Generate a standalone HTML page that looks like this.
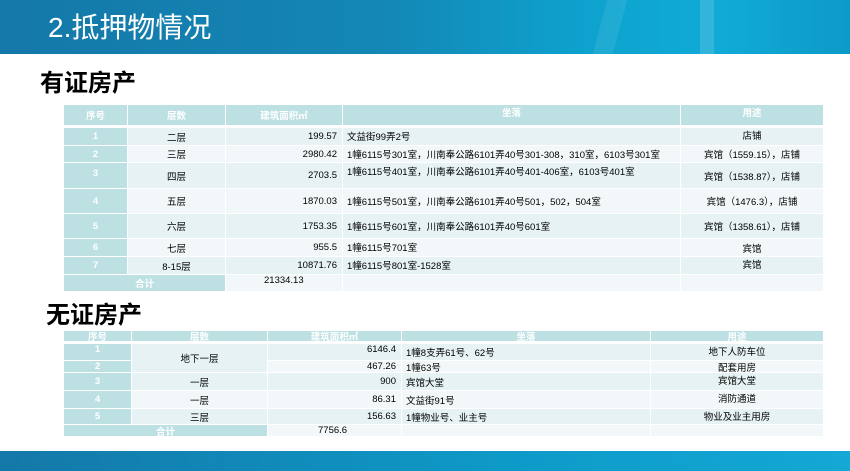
<!DOCTYPE html>
<html><head><meta charset="utf-8"><style>
body{margin:0;width:850px;height:471px;position:relative;overflow:hidden;background:#fff;font-family:"Liberation Sans","Noto Sans CJK SC",sans-serif}
.b{position:absolute;box-sizing:border-box;font-size:9.5px;color:#000;display:flex;align-items:center;justify-content:center;white-space:nowrap;overflow:hidden}
.h{background:#bde0e3;color:#fff;font-weight:bold}
.s{background:#bde0e3;color:#fff;font-weight:bold}
.a{background:#e6f2f3}.c{background:#f2f8f9}
.r{justify-content:flex-end;padding-right:5px}
.l{justify-content:flex-start;align-items:flex-start;padding-left:4px;padding-top:1px}
.l2{justify-content:flex-start;padding-left:4px}
</style></head><body>
<div style="position:absolute;left:0;top:0;width:850px;height:54px;background:linear-gradient(90deg,#1478a8 0%,#1487b5 45%,#0ea3cf 70%,#10aad6 85%,#0e9ac8 100%)"></div>
<div style="position:absolute;left:600px;top:0;width:20px;height:54px;background:rgba(255,255,255,.08);transform:skewX(-15deg)"></div>
<div style="position:absolute;left:700px;top:0;width:14px;height:54px;background:rgba(255,255,255,.15)"></div>
<div style="position:absolute;left:48px;top:6px;font-size:28px;color:#fff">2.抵押物情况</div>
<div style="position:absolute;left:40px;top:63px;font-size:24px;font-weight:bold;color:#000">有证房产</div>
<div style="position:absolute;left:46px;top:295px;font-size:24px;font-weight:bold;color:#000">无证房产</div>
<div style="position:absolute;left:0;top:451px;width:850px;height:20px;background:linear-gradient(90deg,#1478a8,#0e9ac8 60%,#14a8d4)"></div>

<div class="b h" style="left:64px;top:105px;width:63px;height:20px">序号</div>
<div class="b h" style="left:128px;top:105px;width:97px;height:20px">层数</div>
<div class="b h" style="left:226px;top:105px;width:116px;height:20px">建筑面积㎡</div>
<div class="b h" style="left:343px;top:105px;width:337px;height:20px;align-items:flex-start">坐落</div>
<div class="b h" style="left:681px;top:105px;width:142px;height:20px;align-items:flex-start">用途</div>

<div class="b s" style="left:64px;top:128px;width:63px;height:17px">1</div>
<div class="b a" style="left:128px;top:128px;width:97px;height:17px">二层</div>
<div class="b a r" style="left:226px;top:128px;width:116px;height:17px">199.57</div>
<div class="b a l" style="left:343px;top:128px;width:337px;height:17px">文益街99弄2号</div>
<div class="b a" style="left:681px;top:128px;width:142px;height:17px;align-items:flex-start">店铺</div>

<div class="b s" style="left:64px;top:146px;width:63px;height:16px">2</div>
<div class="b c" style="left:128px;top:146px;width:97px;height:16px">三层</div>
<div class="b c r" style="left:226px;top:146px;width:116px;height:16px">2980.42</div>
<div class="b c l" style="left:343px;top:146px;width:337px;height:16px">1幢6115号301室，川南奉公路6101弄40号301-308，310室，6103号301室</div>
<div class="b c" style="left:681px;top:146px;width:142px;height:16px">宾馆（1559.15），店铺</div>

<div class="b s" style="left:64px;top:163px;width:63px;height:25px;align-items:flex-start;padding-top:5px">3</div>
<div class="b a" style="left:128px;top:163px;width:97px;height:25px">四层</div>
<div class="b a r" style="left:226px;top:163px;width:116px;height:25px">2703.5</div>
<div class="b a l" style="left:343px;top:163px;width:337px;height:25px">1幢6115号401室，川南奉公路6101弄40号401-406室，6103号401室</div>
<div class="b a" style="left:681px;top:163px;width:142px;height:25px">宾馆（1538.87），店铺</div>

<div class="b s" style="left:64px;top:189px;width:63px;height:24px">4</div>
<div class="b c" style="left:128px;top:189px;width:97px;height:24px">五层</div>
<div class="b c r" style="left:226px;top:189px;width:116px;height:24px">1870.03</div>
<div class="b c l2" style="left:343px;top:189px;width:337px;height:24px">1幢6115号501室，川南奉公路6101弄40号501，502，504室</div>
<div class="b c" style="left:681px;top:189px;width:142px;height:24px">宾馆（1476.3），店铺</div>

<div class="b s" style="left:64px;top:214px;width:63px;height:24px">5</div>
<div class="b a" style="left:128px;top:214px;width:97px;height:24px">六层</div>
<div class="b a r" style="left:226px;top:214px;width:116px;height:24px">1753.35</div>
<div class="b a l2" style="left:343px;top:214px;width:337px;height:24px">1幢6115号601室，川南奉公路6101弄40号601室</div>
<div class="b a" style="left:681px;top:214px;width:142px;height:24px">宾馆（1358.61），店铺</div>

<div class="b s" style="left:64px;top:239px;width:63px;height:17px">6</div>
<div class="b c" style="left:128px;top:239px;width:97px;height:17px">七层</div>
<div class="b c r" style="left:226px;top:239px;width:116px;height:17px">955.5</div>
<div class="b c l" style="left:343px;top:239px;width:337px;height:17px">1幢6115号701室</div>
<div class="b c" style="left:681px;top:239px;width:142px;height:17px">宾馆</div>

<div class="b s" style="left:64px;top:257px;width:63px;height:17px">7</div>
<div class="b a" style="left:128px;top:257px;width:97px;height:17px">8-15层</div>
<div class="b a r" style="left:226px;top:257px;width:116px;height:17px">10871.76</div>
<div class="b a l" style="left:343px;top:257px;width:337px;height:17px">1幢6115号801室-1528室</div>
<div class="b a" style="left:681px;top:257px;width:142px;height:17px;align-items:flex-start">宾馆</div>

<div class="b s" style="left:64px;top:275px;width:161px;height:16px">合计</div>
<div class="b c" style="left:226px;top:275px;width:116px;height:16px;align-items:flex-start;justify-content:flex-start;padding-left:38px">21334.13</div>
<div class="b c" style="left:343px;top:275px;width:337px;height:16px"></div>
<div class="b c" style="left:681px;top:275px;width:142px;height:16px"></div>

<div class="b h" style="left:64px;top:331px;width:67px;height:10px">序号</div>
<div class="b h" style="left:132px;top:331px;width:135px;height:10px">层数</div>
<div class="b h" style="left:268px;top:331px;width:133px;height:10px">建筑面积㎡</div>
<div class="b h" style="left:402px;top:331px;width:248px;height:10px">坐落</div>
<div class="b h" style="left:651px;top:331px;width:172px;height:10px">用途</div>

<div class="b s" style="left:64px;top:344px;width:67px;height:16px;align-items:flex-start">1</div>
<div class="b s" style="left:64px;top:361px;width:67px;height:11px">2</div>
<div class="b a" style="left:132px;top:344px;width:135px;height:28px">地下一层</div>
<div class="b a r" style="left:268px;top:344px;width:133px;height:16px;align-items:flex-start">6146.4</div>
<div class="b a l2" style="left:402px;top:344px;width:248px;height:16px">1幢8支弄61号、62号</div>
<div class="b a" style="left:651px;top:344px;width:172px;height:16px;align-items:flex-start">地下人防车位</div>
<div class="b c r" style="left:268px;top:361px;width:133px;height:11px">467.26</div>
<div class="b c l2" style="left:402px;top:361px;width:248px;height:11px">1幢63号</div>
<div class="b c" style="left:651px;top:361px;width:172px;height:11px">配套用房</div>

<div class="b s" style="left:64px;top:373px;width:67px;height:17px">3</div>
<div class="b a" style="left:132px;top:373px;width:135px;height:17px">一层</div>
<div class="b a r" style="left:268px;top:373px;width:133px;height:17px">900</div>
<div class="b a l2" style="left:402px;top:373px;width:248px;height:17px">宾馆大堂</div>
<div class="b a" style="left:651px;top:373px;width:172px;height:17px;align-items:flex-start">宾馆大堂</div>

<div class="b s" style="left:64px;top:391px;width:67px;height:17px">4</div>
<div class="b c" style="left:132px;top:391px;width:135px;height:17px">一层</div>
<div class="b c r" style="left:268px;top:391px;width:133px;height:17px">86.31</div>
<div class="b c l2" style="left:402px;top:391px;width:248px;height:17px">文益街91号</div>
<div class="b c" style="left:651px;top:391px;width:172px;height:17px;align-items:flex-start">消防通道</div>

<div class="b s" style="left:64px;top:409px;width:67px;height:15px">5</div>
<div class="b a" style="left:132px;top:409px;width:135px;height:15px">三层</div>
<div class="b a r" style="left:268px;top:409px;width:133px;height:15px">156.63</div>
<div class="b a l2" style="left:402px;top:409px;width:248px;height:15px">1幢物业号、业主号</div>
<div class="b a" style="left:651px;top:409px;width:172px;height:15px;align-items:flex-start">物业及业主用房</div>

<div class="b s" style="left:64px;top:425px;width:203px;height:11px">合计</div>
<div class="b c" style="left:268px;top:425px;width:133px;height:11px;justify-content:flex-start;padding-left:50px">7756.6</div>
<div class="b c" style="left:402px;top:425px;width:248px;height:11px"></div>
<div class="b c" style="left:651px;top:425px;width:172px;height:11px"></div>
</body></html>
